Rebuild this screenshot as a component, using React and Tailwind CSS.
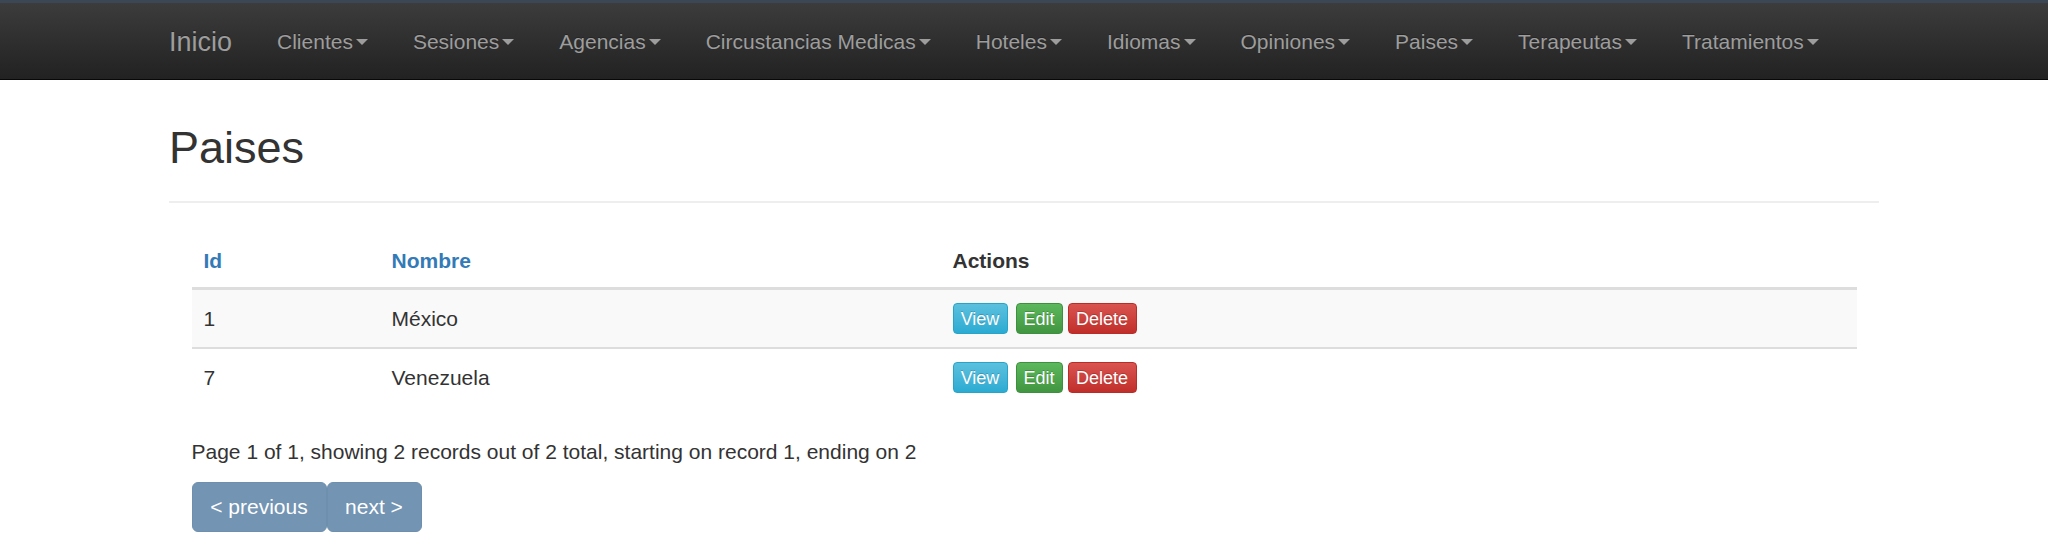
import React from 'react';

const navItems = [
    'Clientes', 'Sesiones', 'Agencias', 'Circustancias Medicas', 'Hoteles',
    'Idiomas', 'Opiniones', 'Paises', 'Terapeutas', 'Tratamientos',
];

const paises = [
    { id: 1, nombre: 'México' },
    { id: 7, nombre: 'Venezuela' },
];

function Caret() {
    return (
        <svg width="12" height="6" viewBox="0 0 12 6" className="ml-[3px] inline-block">
            <path d="M0 0 L12 0 L6 6 Z" fill="#9d9d9d" />
        </svg>
    );
}

function ActionButtons() {
    return (
        <div className="flex items-center">
            <button className="w-[55px] h-[31px] rounded-[4px] border border-[#28a4c9] bg-gradient-to-b from-[#5bc0de] to-[#2aabd2] text-[18px] text-white [text-shadow:0_-1px_0_rgba(0,0,0,0.2)]">
                View
            </button>
            <button className="ml-[8px] w-[47px] h-[31px] rounded-[4px] border border-[#3e8f3e] bg-gradient-to-b from-[#5cb85c] to-[#419641] text-[18px] text-white [text-shadow:0_-1px_0_rgba(0,0,0,0.2)]">
                Edit
            </button>
            <button className="ml-[5px] w-[69px] h-[31px] rounded-[4px] border border-[#b92c28] bg-gradient-to-b from-[#d9534f] to-[#c12e2a] text-[18px] text-white [text-shadow:0_-1px_0_rgba(0,0,0,0.2)]">
                Delete
            </button>
        </div>
    );
}

export default function App() {
    return (
        <div className="min-h-[556px] bg-white text-[#333] font-['Liberation_Sans',Arial,sans-serif] text-[21px] leading-[30px]">
            {/* top bar */}
            <div className="h-[3px] bg-[#3b4754]" />
            <nav className="h-[77px] bg-gradient-to-b from-[#3c3c3c] to-[#222222] border-b border-[#080808]">
                <div className="w-[1755px] mx-auto px-[22.5px] h-[76px] pt-[2px] flex items-center">
                    <a className="-ml-[22.5px] px-[22.5px] text-[27px] leading-[30px] text-[#9d9d9d] [text-shadow:0_-1px_0_rgba(0,0,0,0.25)]">
                        Inicio
                    </a>
                    <ul className="flex items-center">
                        {navItems.map((item) => (
                            <li key={item} className="px-[22.5px] flex items-center text-[#9d9d9d] [text-shadow:0_-1px_0_rgba(0,0,0,0.25)]">
                                {item}
                                <Caret />
                            </li>
                        ))}
                    </ul>
                </div>
            </nav>

            <div className="w-[1755px] mx-auto px-[22.5px]">
                <div className="pt-[43px] pb-[28px] border-b-2 border-[#eeeeee]">
                    <h2 className="text-[45px] leading-[50px] font-normal text-[#333]">Paises</h2>
                </div>

                <div className="px-[22.5px] mt-[31px]">
                    {/* table header */}
                    <div className="flex h-[56px] border-b-[3px] border-[#dddddd] font-bold">
                        <div className="w-[188px] px-[12px] flex items-center">
                            <a className="text-[#337ab7]">Id</a>
                        </div>
                        <div className="w-[561px] px-[12px] flex items-center">
                            <a className="text-[#337ab7]">Nombre</a>
                        </div>
                        <div className="flex-1 px-[12px] flex items-center">Actions</div>
                    </div>

                    {paises.map((p, i) => (
                        <div
                            key={p.id}
                            className={
                                'flex h-[59px] ' +
                                (i === 0 ? 'bg-[#f9f9f9] border-b-2 border-[#dddddd]' : 'bg-white pb-[2px]')
                            }
                        >
                            <div className="w-[188px] px-[12px] flex items-center">{p.id}</div>
                            <div className="w-[561px] px-[12px] flex items-center">{p.nombre}</div>
                            <div className="flex-1 px-[12px] flex items-center">
                                <ActionButtons />
                            </div>
                        </div>
                    ))}

                    <p className="mt-[29px] mb-[15px]">
                        Page 1 of 1, showing 2 records out of 2 total, starting on record 1, ending on 2
                    </p>

                    <div className="flex">
                        <button className="w-[135px] h-[50px] rounded-[6px] bg-[#7394b3] border border-[#6e90ae] text-white text-[21px]">
                            &lt; previous
                        </button>
                        <button className="w-[95px] h-[50px] rounded-[6px] bg-[#7394b3] border border-[#6e90ae] text-white text-[21px]">
                            next &gt;
                        </button>
                    </div>
                </div>
            </div>
        </div>
    );
}
